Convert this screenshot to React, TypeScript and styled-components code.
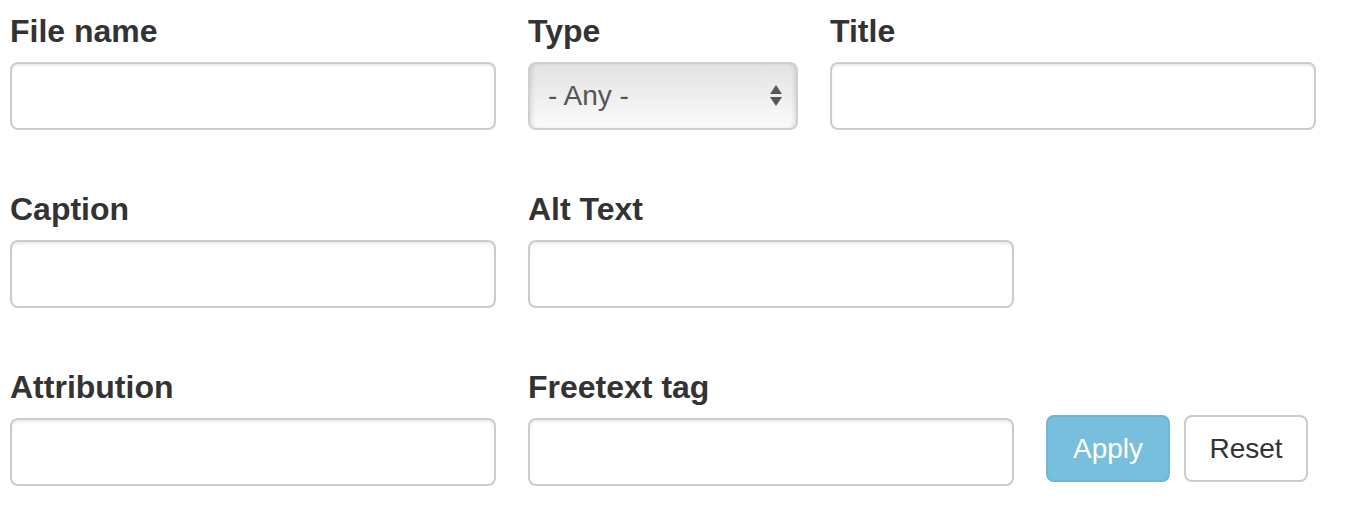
import React from "react";
import styled, { createGlobalStyle } from "styled-components";

const Global = createGlobalStyle`
  html, body { margin: 0; padding: 0; background: #fff; }
  body { font-family: "Liberation Sans", Arial, sans-serif; color: #333; }
`;

const Page = styled.div`
  padding: 12px 0 0 10px;
  display: flex;
  flex-direction: column;
  gap: 60px;
`;

const Row = styled.div`
  display: flex;
  align-items: flex-end;
  gap: 32px;
`;

const Field = styled.div<{ $w: number }>`
  display: flex;
  flex-direction: column;
  width: ${(p) => p.$w}px;
`;

const Label = styled.label`
  display: block;
  font-size: 32px;
  line-height: 39px;
  font-weight: 700;
  color: #333;
  margin-bottom: 11px;
  white-space: nowrap;
`;

const TextInput = styled.input`
  box-sizing: border-box;
  width: 100%;
  height: 68px;
  border: 2px solid #cccccc;
  border-radius: 8px;
  background: #fff;
  box-shadow: inset 0 2px 2px rgba(0, 0, 0, 0.075);
  font-family: inherit;
  font-size: 28px;
  padding: 0 24px;
  margin: 0;
  outline: none;
`;

const SelectBox = styled.div`
  box-sizing: border-box;
  height: 68px;
  border: 2px solid #cfcfcf;
  border-radius: 8px;
  background: linear-gradient(#e3e3e3 0%, #ededed 45%, #fbfbfb 100%);
  box-shadow: inset 4px 0 4px -2px rgba(0, 0, 0, 0.1),
    inset -4px 0 4px -2px rgba(0, 0, 0, 0.1);
  display: flex;
  align-items: center;
  justify-content: space-between;
  padding: 0 14px 0 18px;
  font-size: 28px;
  color: #555;
`;

const SelectText = styled.span`
  line-height: 1;
`;

const ButtonGroup = styled.div`
  display: flex;
  gap: 14px;
  margin-bottom: 4px;
`;

const Button = styled.button<{ $primary?: boolean }>`
  box-sizing: border-box;
  width: 124px;
  height: 67px;
  border-radius: 8px;
  font-family: inherit;
  font-size: 28px;
  padding: 0;
  margin: 0;
  cursor: pointer;
  border: 2px solid ${(p) => (p.$primary ? "#6cb6d8" : "#cccccc")};
  background: ${(p) => (p.$primary ? "#78bfdd" : "#fff")};
  color: ${(p) => (p.$primary ? "#fff" : "#333")};
`;

const Arrows = () => (
  <svg width="12" height="24" viewBox="0 0 12 24">
    <polygon points="6,1 12,10 0,10" fill="#555" />
    <polygon points="0,13 12,13 6,22" fill="#555" />
  </svg>
);

export default function App() {
  return (
    <>
      <Global />
      <Page>
        <Row>
          <Field $w={486}>
            <Label>File name</Label>
            <TextInput type="text" />
          </Field>
          <Field $w={270}>
            <Label>Type</Label>
            <SelectBox>
              <SelectText>- Any -</SelectText>
              <Arrows />
            </SelectBox>
          </Field>
          <Field $w={486}>
            <Label>Title</Label>
            <TextInput type="text" />
          </Field>
        </Row>
        <Row>
          <Field $w={486}>
            <Label>Caption</Label>
            <TextInput type="text" />
          </Field>
          <Field $w={486}>
            <Label>Alt Text</Label>
            <TextInput type="text" />
          </Field>
        </Row>
        <Row>
          <Field $w={486}>
            <Label>Attribution</Label>
            <TextInput type="text" />
          </Field>
          <Field $w={486}>
            <Label>Freetext tag</Label>
            <TextInput type="text" />
          </Field>
          <ButtonGroup>
            <Button $primary>Apply</Button>
            <Button>Reset</Button>
          </ButtonGroup>
        </Row>
      </Page>
    </>
  );
}
